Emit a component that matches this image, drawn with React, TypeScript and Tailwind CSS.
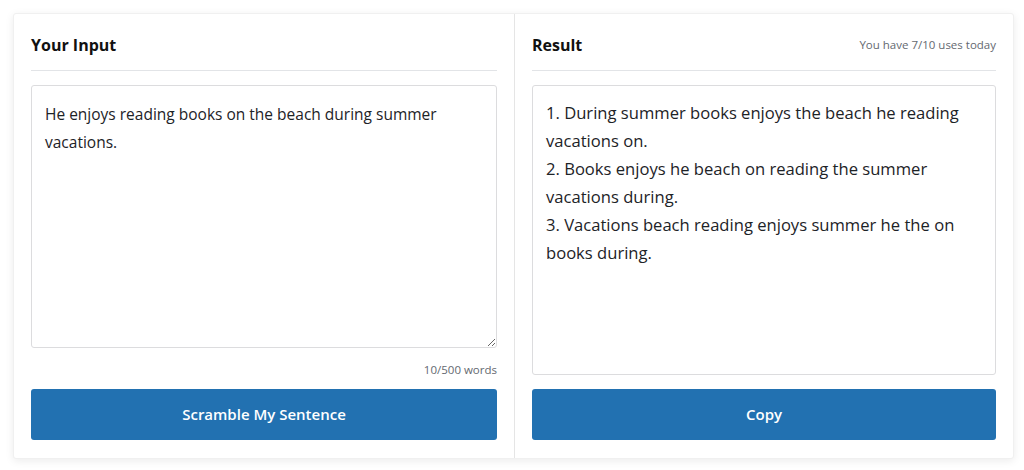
import React, { useState } from 'react';

const results = [
    '1. During summer books enjoys the beach he reading vacations on.',
    '2. Books enjoys he beach on reading the summer vacations during.',
    '3. Vacations beach reading enjoys summer he the on books during.',
];

export default function App() {
    const [text, setText] = useState('He enjoys reading books on the beach during summer vacations.');
    const words = text.trim() ? text.trim().split(/\s+/).length : 0;

    return (
        <div className="min-h-[470px] bg-white pt-[13px] pl-[13px] pr-[10px] font-['Open_Sans',sans-serif] text-[#1d2327]">
            <div className="flex h-[446px] rounded-[3px] border border-[#f0f0f0] bg-white shadow-[0_2px_8px_rgba(0,0,0,0.08)]">
                {/* Input */}
                <div className="flex w-[501px] shrink-0 flex-col border-r border-[#e5e5e5] px-[17px] pt-[17px] pb-[18px]">
                    <div className="flex h-[40px] items-start border-b border-[#e2e4e7]">
                        <h2 className="text-[16px] font-bold leading-[28px] text-[#111]">Your Input</h2>
                    </div>
                    <textarea
                        value={text}
                        onChange={e => setText(e.target.value)}
                        className="mt-[14px] h-[263px] w-full resize-y rounded-[3px] border border-[#dcdcde] px-[13px] py-[14px] text-[15.5px] leading-[28px] text-[#1d2327] outline-none"
                    />
                    <div className="mt-[14px] text-right text-[11.5px] leading-[16px] text-[#646970]">{words}/500 words</div>
                    <button className="mt-[11px] h-[51px] w-full rounded-[3px] bg-[#2271b1] text-[15px] font-semibold text-white">
                        Scramble My Sentence
                    </button>
                </div>

                {/* Result */}
                <div className="flex flex-1 flex-col px-[17px] pt-[17px] pb-[18px]">
                    <div className="flex h-[40px] items-start justify-between border-b border-[#e2e4e7]">
                        <h2 className="text-[16px] font-bold leading-[28px] text-[#111]">Result</h2>
                        <span className="text-[11.5px] leading-[28px] text-[#646970]">You have 7/10 uses today</span>
                    </div>
                    <div className="mt-[14px] h-[290px] rounded-[3px] border border-[#dcdcde] px-[13px] py-[13px] text-[16.6px] leading-[28px]">
                        {results.map(r => (
                            <div key={r}>{r}</div>
                        ))}
                    </div>
                    <button className="mt-[14px] h-[51px] w-full rounded-[3px] bg-[#2271b1] text-[15px] font-semibold text-white">
                        Copy
                    </button>
                </div>
            </div>
        </div>
    );
}
